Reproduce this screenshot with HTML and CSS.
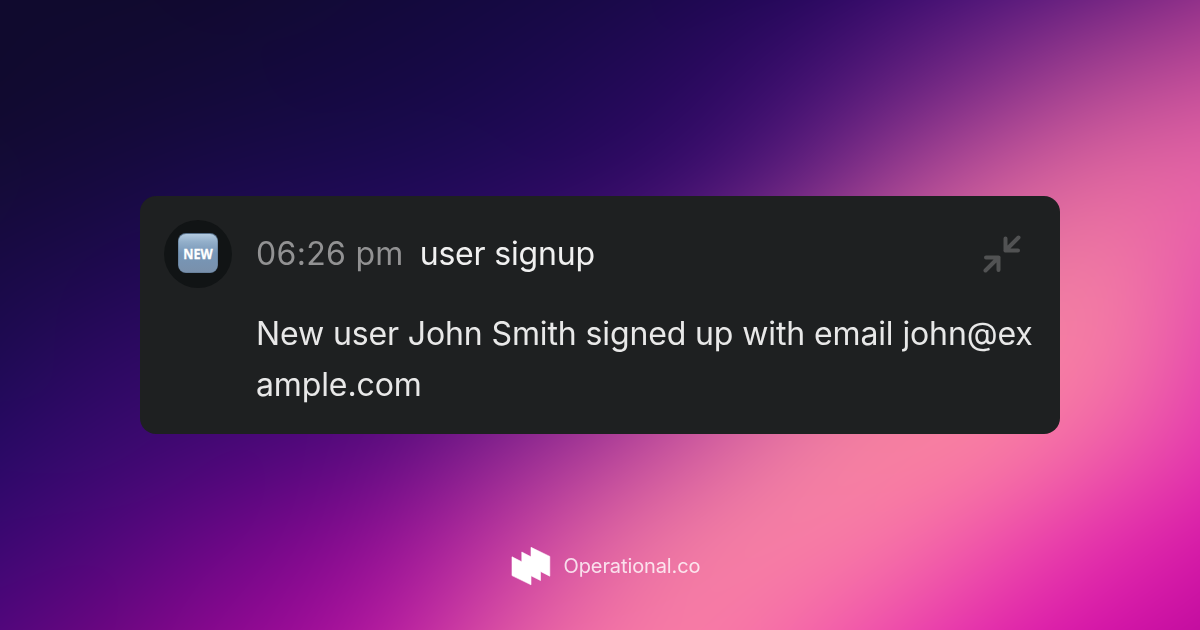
FILE: index.html
```html
<!DOCTYPE html>
<html lang="en">
<head>
<meta charset="utf-8">
<title>Operational.co</title>
<link rel="stylesheet" href="styles.css">
</head>
<body>
<canvas class="backdrop" width="1200" height="630"></canvas>
<main class="page">
  <article class="card">
    <div class="avatar">
      <svg class="badge" viewBox="0 0 40 40">
        <defs>
          <linearGradient id="tile" x1="0" y1="0" x2="0" y2="1">
            <stop offset="0" stop-color="#b3cbe0"/>
            <stop offset="0.2" stop-color="#93afca"/>
            <stop offset="0.5" stop-color="#7797b8"/>
            <stop offset="1" stop-color="#7990ab"/>
          </linearGradient>
        </defs>
        <rect width="40" height="40" rx="8" fill="#58718b"/>
        <rect x="0.5" y="1" width="39" height="38.400" rx="7.500" fill="url(#tile)"/>
        <text class="badge-text" x="20" y="25.700" text-anchor="middle" textLength="29.500" lengthAdjust="spacingAndGlyphs">NEW</text>
      </svg>
    </div>
    <div class="body">
      <header class="head">
        <span class="time">06:26 pm</span>
        <span class="title">user signup</span>
        <svg class="collapse" viewBox="0 0 40 40">
          <path d="M36.500 3.500 23.5 16.5M23.5 4.5v12h12.500M3.500 36.500l13-13M4 23.500h12.500v12.500"/>
        </svg>
      </header>
      <p class="message">New user John Smith signed up with email john@example.com</p>
    </div>
  </article>
  <footer class="brand">
    <svg class="logo" viewBox="0 0 40 40">
      <path d="M1 10.800 10.800 15.800V6L20 10.800V1.300L38.800 10.400V30.200L29.500 25.400V34.500L20 29.800V38.800L1 29.600Z"/>
    </svg>
    <span class="brand-name">Operational.co</span>
  </footer>
</main>
<script src="backdrop.js"></script>
</body>
</html>
```
FILE: styles.css
```css
body {
  margin: 0;
  font-family: Inter, "Liberation Sans", sans-serif;
  background: #16093d;
}

.backdrop {
  position: absolute;
  inset: 0;
  z-index: -1;
}

.page {
  box-sizing: border-box;
  height: 630px;
  padding: 196px 140px 0;
  display: flex;
  flex-direction: column;
  align-items: center;
  overflow: hidden;
}

.card {
  box-sizing: border-box;
  width: 920px;
  height: 238px;
  padding: 24px 24px 0;
  display: flex;
  gap: 24px;
  border-radius: 16px;
  background: #1e2021;
}

.avatar {
  flex: none;
  width: 68px;
  height: 68px;
  display: flex;
  align-items: center;
  justify-content: center;
  border-radius: 50%;
  background: #111415;
}

.badge {
  width: 40px;
  height: 40px;
  margin-top: -2px;
}

.badge-text {
  font: 700 15px "Noto Sans", sans-serif;
  fill: #fff;
  stroke: #fff;
  stroke-width: 0.3;
}

.body {
  flex: 1;
  min-width: 0;
}

.head {
  height: 68px;
  display: flex;
  align-items: center;
  font-size: 32px;
}

.time,
.title {
  padding-bottom: 2px;
}

.time {
  margin-right: 16px;
  letter-spacing: 0.3px;
  color: #929293;
}

.title {
  letter-spacing: -0.17px;
  color: #f0f0f0;
}

.collapse {
  width: 40px;
  height: 40px;
  margin: 0 14px 0 auto;
  fill: none;
  stroke: #515253;
  stroke-width: 4;
  stroke-linecap: round;
  stroke-linejoin: round;
}

.message {
  width: 780px;
  margin: 20px 0 0;
  font-size: 32px;
  line-height: 51.200px;
  letter-spacing: -0.12px;
  color: #e8e8e8;
  word-break: break-all;
}

.brand {
  height: 40px;
  margin-top: 112px;
  padding-left: 12px;
  display: flex;
  align-items: center;
  gap: 12px;
}

.logo {
  width: 40px;
  height: 40px;
  fill: #fff;
  stroke: #fff;
  stroke-width: 0.6;
  stroke-linejoin: round;
}

.brand-name {
  font-size: 20px;
  letter-spacing: -0.1px;
  color: rgba(255, 255, 255, 0.8);
}
```
FILE: backdrop.js
```js
// Mesh gradient: control colours every 100px across and 90px down.
const rows = [
  "100a2e 100a2e 110930 120a36 13093c 150942 190948 1f0852 28085e 3f0e70 581a7c 752683 92318a",
  "100a2e 120a33 130a38 14093f 160944 19094c 200955 2a085f 3f0f72 64207f 8c338c b54a95 c8509a",
  "140b38 160a3f 190a48 1b0a4d 1c0b54 220a5a 2a0860 3b0d70 63207f a03f92 cc5a9b e4699f e968a6",
  "190a46 1d094d 220959 270960 2d0966 380a6c 4c1278 722685 a84594 d6639c e876a0 f37fa4 e95caa",
  "1f0a54 2b0960 320a69 3a086e 43086f 561080 7a2088 b0429a d6639c ee7aa0 f882a2 f780a4 e850ab",
  "290966 370a6e 430774 50077c 650e84 8c2590 b23d9a d65fa0 f07fa4 fa859f f980a3 f160a8 e63cad",
  "3c0772 4d067a 650784 7c078c 981396 c034a0 e065a2 f480a4 f983a4 f774a7 f050aa e52fac d81aa8",
  "52067c 68067f 83088c 9a0b97 b81da0 d94fa4 f272a5 f87fa5 f66ba8 ee4cab e22aab d515a8 c40ea0"
].map(r => r.split(" ").map(h => [0, 2, 4].map(i => parseInt(h.slice(i, i + 2), 16))));

const canvas = document.querySelector(".backdrop");
const ctx = canvas.getContext("2d");
const W = canvas.width, H = canvas.height;
const img = ctx.createImageData(W, H);

// Cubic B-spline weights keep the blend free of visible grid lines.
function weights(t) {
  const u = 1 - t;
  return [u * u * u / 6, (3 * t * t * t - 6 * t * t + 4) / 6,
    (-3 * t * t * t + 3 * t * t + 3 * t + 1) / 6, t * t * t / 6];
}

function at(r, c, k) {
  const y = Math.max(0, Math.min(7, r)), x = Math.max(0, Math.min(12, c));
  const fx = c < 0 ? 2 * rows[y][0][k] - rows[y][1][k] : c > 12 ? 2 * rows[y][12][k] - rows[y][11][k] : rows[y][x][k];
  if (r < 0) return 2 * fx - rows[1][x][k];
  if (r > 7) return 2 * fx - rows[6][x][k];
  return fx;
}

for (let y = 0; y < H; y++) {
  const gy = Math.floor(y / 90), wy = weights(y / 90 - gy);
  const line = [];
  for (let c = -1; c < 15; c++) {
    line.push([0, 1, 2].map(k => wy.reduce((s, w, j) => s + w * at(gy + j - 1, c, k), 0)));
  }
  for (let x = 0; x < W; x++) {
    const gx = Math.floor(x / 100), wx = weights(x / 100 - gx);
    const o = (y * W + x) * 4;
    for (let k = 0; k < 3; k++) {
      img.data[o + k] = wx.reduce((s, w, j) => s + w * line[gx + j][k], 0);
    }
    img.data[o + 3] = 255;
  }
}
ctx.putImageData(img, 0, 0);
```
